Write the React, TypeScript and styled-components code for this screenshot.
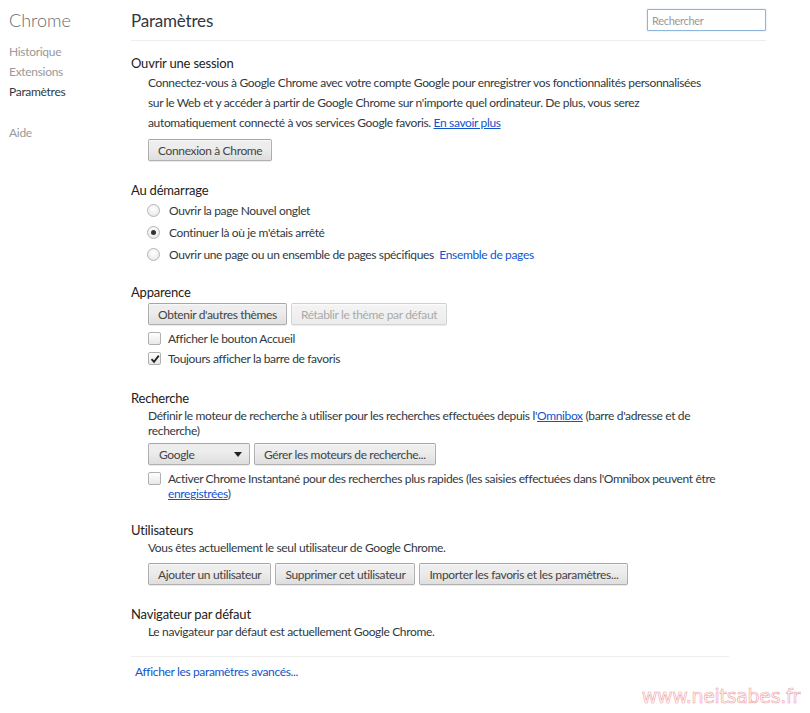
import React from "react";
import styled, { createGlobalStyle } from "styled-components";

const GlobalStyle = createGlobalStyle`
  html, body {
    margin: 0;
    padding: 0;
    background: #ffffff;
  }
  body {
    font-family: Lato, "Noto Sans", sans-serif;
    font-size: 12px;
    color: #303942;
  }
`;

const Page = styled.div`
  position: relative;
  display: flex;
  width: 810px;
  height: 713px;
  overflow: hidden;
  background: #fff;
`;

const Sidebar = styled.nav`
  width: 122px;
  padding-left: 9px;
  flex-shrink: 0;
`;

const Brand = styled.div`
  height: 40px;
  line-height: 40px;
  font-size: 18px;
  color: #666b70;
  font-weight: 300;
`;

const NavList = styled.ul`
  list-style: none;
  margin: 2px 0 0;
  padding: 0;
  letter-spacing: -0.3px;
`;

const NavItem = styled.li<{ $active?: boolean; $gap?: boolean }>`
  height: 20px;
  line-height: 20px;
  font-size: 12px;
  color: ${(p) => (p.$active ? "#303942" : "#999999")};
  margin-top: ${(p) => (p.$gap ? "21px" : "0")};
`;

const Main = styled.main`
  width: 635px;
  display: flex;
  flex-direction: column;
`;

const Header = styled.header`
  height: 40px;
  border-bottom: 1px solid #eeeeee;
  display: flex;
  align-items: center;
  justify-content: space-between;
`;

const PageTitle = styled.h1`
  margin: 0;
  font-size: 17px;
  font-weight: normal;
  letter-spacing: -0.2px;
  color: #303942;
`;

const Search = styled.input`
  box-sizing: border-box;
  width: 119px;
  height: 22px;
  border: 1px solid #8fb4d9;
  border-radius: 1px;
  padding: 0 4px;
  font-family: inherit;
  font-size: 11px;
  letter-spacing: -0.3px;
  color: #303942;
  outline: none;
  box-shadow: 0 0 2px rgba(80, 140, 220, 0.35);
  &::placeholder {
    color: #999;
  }
`;

const Sections = styled.div`
  display: flex;
  flex-direction: column;
  padding-top: 13px;
  letter-spacing: -0.35px;
`;

const Section = styled.section<{ $gap?: number }>`
  margin-top: ${(p) => p.$gap ?? 20}px;
`;

const SectionTitle = styled.h3`
  margin: 0;
  height: 18px;
  line-height: 18px;
  font-size: 13px;
  font-weight: normal;
  letter-spacing: -0.2px;
  color: #222;
`;

const Body = styled.div`
  padding-left: 17px;
`;

const Text = styled.p<{ $lh?: number; $mt?: number }>`
  margin: ${(p) => p.$mt ?? 0}px 0 0;
  line-height: ${(p) => p.$lh ?? 18}px;
  color: #303942;
`;

const Link = styled.a<{ $plain?: boolean }>`
  color: #1155cc;
  text-decoration: ${(p) => (p.$plain ? "none" : "underline")};
  cursor: pointer;
`;

const ButtonRow = styled.div<{ $mt?: number }>`
  display: flex;
  gap: 4px;
  margin-top: ${(p) => p.$mt ?? 4}px;
`;

const Button = styled.button`
  box-sizing: border-box;
  height: 22px;
  padding: 0 9px;
  font-family: inherit;
  font-size: 12px;
  letter-spacing: -0.35px;
  color: #444;
  border: 1px solid rgba(0, 0, 0, 0.25);
  border-radius: 2px;
  background: linear-gradient(#ededed, #ededed 38%, #dedede);
  box-shadow: 0 1px 0 rgba(0, 0, 0, 0.08), inset 0 1px 2px rgba(255, 255, 255, 0.75);
  &:disabled {
    color: #aaa;
    border-color: rgba(0, 0, 0, 0.12);
    background: linear-gradient(#f4f4f4, #ececec);
  }
`;

const Select = styled.div`
  box-sizing: border-box;
  width: 102px;
  height: 22px;
  display: flex;
  align-items: center;
  justify-content: space-between;
  padding: 0 7px 0 10px;
  color: #444;
  border: 1px solid rgba(0, 0, 0, 0.25);
  border-radius: 2px;
  background: linear-gradient(#ededed, #ededed 38%, #dedede);
  box-shadow: 0 1px 0 rgba(0, 0, 0, 0.08);
`;

const Caret = styled.span`
  width: 0;
  height: 0;
  border-left: 4px solid transparent;
  border-right: 4px solid transparent;
  border-top: 5px solid #222;
`;

const OptionRow = styled.label<{ $h?: number; $mt?: number }>`
  display: flex;
  align-items: center;
  height: ${(p) => p.$h ?? 22}px;
  margin-top: ${(p) => p.$mt ?? 0}px;
  color: #303942;
`;

const Radio = styled.span<{ $checked?: boolean }>`
  box-sizing: border-box;
  width: 13px;
  height: 13px;
  margin-left: -1px;
  margin-right: 9px;
  border-radius: 50%;
  border: 1px solid #b5b5b5;
  background: radial-gradient(circle at 50% 35%, #ffffff, #e4e4e4);
  display: flex;
  align-items: center;
  justify-content: center;
  &::after {
    content: "";
    display: ${(p) => (p.$checked ? "block" : "none")};
    width: 5px;
    height: 5px;
    border-radius: 50%;
    background: #333;
  }
`;

const Box = styled.span`
  box-sizing: border-box;
  flex-shrink: 0;
  width: 13px;
  height: 13px;
  margin-right: 7px;
  border: 1px solid #b0b0b0;
  border-radius: 2px;
  background: linear-gradient(#ffffff, #e8e8e8);
  display: flex;
  align-items: center;
  justify-content: center;
`;

const WrapRow = styled.div`
  display: flex;
  align-items: flex-start;
  margin-top: 6px;
  line-height: 15px;
  & > span:first-child {
    margin-top: 1px;
  }
`;

const Divider = styled.hr`
  width: 598px;
  margin: 15px 0 0;
  border: none;
  border-top: 1px solid #eeeeee;
`;

const Advanced = styled.div`
  margin-top: 6px;
  padding-left: 4px;
  line-height: 18px;
  letter-spacing: -0.35px;
`;

const Watermark = styled.div`
  position: absolute;
  right: 10px;
  bottom: 6px;
  font-family: "DejaVu Sans", sans-serif;
  font-size: 19px;
  letter-spacing: -0.3px;
  color: transparent;
  -webkit-text-stroke: 0.6px #ee9f9f;
`;

const Check = () => (
  <svg width="10" height="10" viewBox="0 0 10 10">
    <path d="M1.5 5.2 L4 7.8 L8.8 1.6" fill="none" stroke="#222" strokeWidth="1.8" />
  </svg>
);

export default function App() {
  return (
    <>
      <GlobalStyle />
      <Page>
        <Sidebar>
          <Brand>Chrome</Brand>
          <NavList>
            <NavItem>Historique</NavItem>
            <NavItem>Extensions</NavItem>
            <NavItem $active>Paramètres</NavItem>
            <NavItem $gap>Aide</NavItem>
          </NavList>
        </Sidebar>
        <Main>
          <Header>
            <PageTitle>Paramètres</PageTitle>
            <Search placeholder="Rechercher" />
          </Header>
          <Sections>
            <Section $gap={0}>
              <SectionTitle>Ouvrir une session</SectionTitle>
              <Body>
                <Text $lh={20} $mt={1}>
                  Connectez-vous à Google Chrome avec votre compte Google pour enregistrer vos fonctionnalités personnalisées
                  <br />
                  sur le Web et y accéder à partir de Google Chrome sur n'importe quel ordinateur. De plus, vous serez
                  <br />
                  automatiquement connecté à vos services Google favoris. <Link>En savoir plus</Link>
                </Text>
                <ButtonRow $mt={6}>
                  <Button>Connexion à Chrome</Button>
                </ButtonRow>
              </Body>
            </Section>

            <Section>
              <SectionTitle>Au démarrage</SectionTitle>
              <Body>
                <OptionRow>
                  <Radio />
                  Ouvrir la page Nouvel onglet
                </OptionRow>
                <OptionRow>
                  <Radio $checked />
                  Continuer là où je m'étais arrêté
                </OptionRow>
                <OptionRow>
                  <Radio />
                  Ouvrir une page ou un ensemble de pages spécifiques&nbsp;&nbsp;
                  <Link $plain>Ensemble de pages</Link>
                </OptionRow>
              </Body>
            </Section>

            <Section $gap={18}>
              <SectionTitle>Apparence</SectionTitle>
              <Body>
                <ButtonRow $mt={2}>
                  <Button>Obtenir d'autres thèmes</Button>
                  <Button disabled>Rétablir le thème par défaut</Button>
                </ButtonRow>
                <OptionRow $h={20} $mt={3}>
                  <Box />
                  Afficher le bouton Accueil
                </OptionRow>
                <OptionRow $h={21}>
                  <Box>
                    <Check />
                  </Box>
                  Toujours afficher la barre de favoris
                </OptionRow>
              </Body>
            </Section>

            <Section>
              <SectionTitle>Recherche</SectionTitle>
              <Body>
                <Text $lh={15} $mt={1}>
                  Définir le moteur de recherche à utiliser pour les recherches effectuées depuis l'<Link>Omnibox</Link> (barre d'adresse et de
                  <br />
                  recherche)
                </Text>
                <ButtonRow $mt={5}>
                  <Select>
                    Google
                    <Caret />
                  </Select>
                  <Button>Gérer les moteurs de recherche...</Button>
                </ButtonRow>
                <WrapRow>
                  <Box />
                  <span>
                    Activer Chrome Instantané pour des recherches plus rapides (les saisies effectuées dans l'Omnibox peuvent être
                    <br />
                    <Link>enregistrées</Link>)
                  </span>
                </WrapRow>
              </Body>
            </Section>

            <Section>
              <SectionTitle>Utilisateurs</SectionTitle>
              <Body>
                <Text>Vous êtes actuellement le seul utilisateur de Google Chrome.</Text>
                <ButtonRow $mt={6}>
                  <Button>Ajouter un utilisateur</Button>
                  <Button>Supprimer cet utilisateur</Button>
                  <Button>Importer les favoris et les paramètres...</Button>
                </ButtonRow>
              </Body>
            </Section>

            <Section>
              <SectionTitle>Navigateur par défaut</SectionTitle>
              <Body>
                <Text>Le navigateur par défaut est actuellement Google Chrome.</Text>
              </Body>
            </Section>
          </Sections>
          <Divider />
          <Advanced>
            <Link $plain>Afficher les paramètres avancés...</Link>
          </Advanced>
        </Main>
        <Watermark>www.neitsabes.fr</Watermark>
      </Page>
    </>
  );
}
